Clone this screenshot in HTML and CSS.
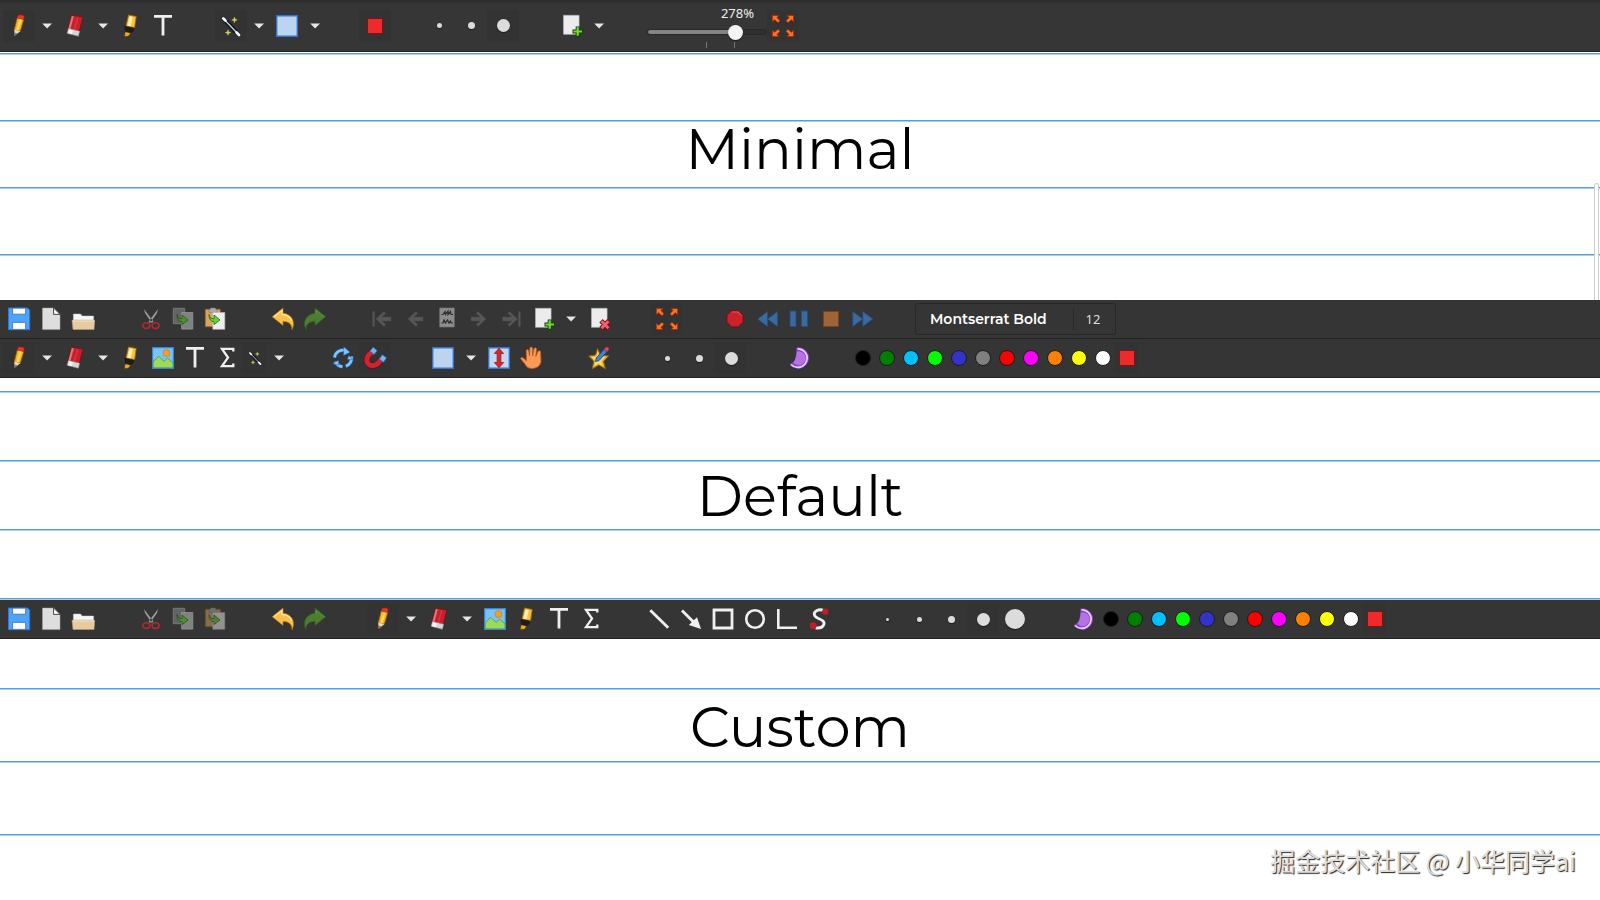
FILE: index.html
```html
<!DOCTYPE html>
<html lang="en">
<head>
    <meta charset="UTF-8">
    <meta name="viewport" content="width=device-width, initial-scale=1.0">
    <title>Toolbar Layouts</title>
    <link rel="stylesheet" href="styles.css">
</head>
<body>
    <!-- icon sprite -->
    <svg class="sprite" aria-hidden="true">
        <symbol id="pencil" viewBox="1 0 24 24">
            <path d="M11.5 3l6.5 1.6-3.7 12.6-6-1.4z" fill="#f8b51c" stroke="#a85a08" stroke-width=".8"/>
            <path d="M14 4l2 .5-3.7 12-2-.4z" fill="#ffdc62"/>
            <path d="M12 1.2q3-1.2 6.3.8l-.6 3.6-6.4-1.6z" fill="#e8362f" stroke="#9b1712" stroke-width=".6"/>
            <path d="M8.3 15.6l6 1.6-5.6 4.6z" fill="#e9d9b4"/>
            <path d="M8.4 18.6l3 1-2.8 2.3z" fill="#777"/>
        </symbol>
        <symbol id="eraser" viewBox="0 0 24 24">
            <path d="M8.6 1l11.2 2.2-4.3 17.6-11.3-3.2z" fill="#c81f2b" stroke="#7e0e15" stroke-width=".8"/>
            <path d="M8.8 2l2 .4-3.8 14-2-.5z" fill="#e2777b"/>
            <path d="M14 3l1.5.3-3.8 14-1.600-.4z" fill="#d9343d"/>
            <path d="M5.500 14.400l11.200 2.800-1.300 5.100-11.400-3z" fill="#d6d6d6" stroke="#888" stroke-width=".6"/>
            <path d="M6 15.300l4 1-1 4-4-1z" fill="#f2f2f2"/>
        </symbol>
        <symbol id="marker" viewBox="1 0 24 24">
            <path d="M10.600 1l7.600 1.600-1.600 11-8.600-1.400z" fill="#f4c343" stroke="#ae6b08" stroke-width=".9"/>
            <path d="M11.600 2.300l3.200.7-2 9.300-3.300-.5z" fill="#fff0ac"/>
            <path d="M6.500 11.800l9.800 2.300-.9 3.400-3.400 1.700-5-1.300z" fill="#1d1d1d"/>
            <path d="M7.300 18l5 1.300-2 2.800-3.600.1z" fill="#f9ae18" stroke="#9c5d00" stroke-width=".5"/>
        </symbol>
        <symbol id="text" viewBox="0 0 24 24">
            <path d="M3 2.400h18M12 2.400v19" fill="none" stroke="#f0f0f0" stroke-width="2.800"/>
        </symbol>
        <symbol id="sigma" viewBox="0 0 24 24">
            <path d="M18.300 5.500V2.800H7l6 8.800-6 8.600h11.300v-2.800" fill="none" stroke="#f0f0f0" stroke-width="2.300"/>
        </symbol>
        <symbol id="wand" viewBox="0 0 24 24">
            <path d="M5 5.200l14.300 15" stroke="#111620" stroke-width="4.400" stroke-linecap="round"/>
            <path d="M5 5.200l14.300 15" stroke="#c3ccd8" stroke-width="1.400" stroke-linecap="round"/>
            <path d="M4.400 4.600l2 2M17.600 18.600l2.400 2.400" stroke="#f5f5f5" stroke-width="2.800" stroke-linecap="round"/>
            <path d="M15.500 3.200l.7 2 2 .7-2 .7-.7 2-.7-2-2-.7 2-.7zM9 15.900l.7 2 2 .7-2 .7-.7 2-.7-2-2-.7 2-.7z" fill="#d9d45a" stroke="#d9d45a" stroke-width=".5"/>
        </symbol>
        <symbol id="select" viewBox="0 0 24 24">
            <path d="M1.700 1.700h20.600v20.600H1.700z" fill="#bdd4f0" stroke="#3273ce" stroke-width="1.400"/>
        </symbol>
        <symbol id="vspace" viewBox="0 0 24 24">
            <path d="M1.700 1.700h20.600v20.600H1.700z" fill="#c3d8f2" stroke="#3273ce" stroke-width="1.400"/>
            <path d="M12 2.200l4.700 5.300h-2.800v9h2.800L12 21.800l-4.700-5.300h2.800v-9H7.300z" fill="#d8262d" stroke="#8c1418" stroke-width=".7"/>
        </symbol>
        <symbol id="addpage" viewBox="0 0 24 24">
            <path d="M4.500 1.300h15.600v19H4.500z" fill="#ececec" stroke="#bbb" stroke-width=".6"/>
            <path d="M16.700 12.400h4v3.200h3.200v3.900h-3.200v3.200h-4v-3.200h-3.200v-3.900h3.200z" fill="#173b08"/>
            <path d="M17.600 13.300h2.200v3.200H23v2.100h-3.200v3.200h-2.200v-3.200h-3.200v-2.100h3.200z" fill="#72dc2c"/>
        </symbol>
        <symbol id="delpage" viewBox="0 0 24 24">
            <path d="M4.500 1.300h15.600v19H4.500z" fill="#ececec" stroke="#bbb" stroke-width=".6"/>
            <path d="M14 13.800l8 8m0-8l-8 8" stroke="#7d1018" stroke-width="4.800"/>
            <path d="M14.500 14.300l7 7m0-7l-7 7" stroke="#f4616a" stroke-width="2.800"/>
        </symbol>
        <symbol id="fullscreen" viewBox="0 0 24 24">
            <g fill="#ff7024" stroke="#9d2500" stroke-width=".7">
                <path d="M1.400 1.400H8L6 3.400l3 3.400-2 2-3.400-3-2.200 2z"/>
                <path d="M22.600 1.400H16l2 2-3 3.400 2 2 3.400-3 2.200 2z"/>
                <path d="M1.400 22.600H8l-2-2 3-3.400-2-2-3.400 3-2.200-2z"/>
                <path d="M22.600 22.600H16l2-2-3-3.400 2-2 3.400 3 2.200-2z"/>
            </g>
        </symbol>
        <symbol id="save" viewBox="0 0 24 24">
            <path d="M1.500 1h19l2.200 2.200v19.500H1.500z" fill="#4ea3fa" stroke="#2c78d8"/>
            <path d="M5.600 1.200h13v6h-13z" fill="#fff" stroke="#2c6fca" stroke-width=".8"/>
            <path d="M5.600 15.400h13v7h-13z" fill="#fff" stroke="#2c6fca" stroke-width=".8"/>
        </symbol>
        <symbol id="new" viewBox="0 0 24 24">
            <path d="M3.500 1H15l6 6.200v15.400H3.500z" fill="#dedede" stroke="#aaa" stroke-width=".5"/>
            <path d="M14.600 1l6.400 6.400h-6.400z" fill="#fff" stroke="#333" stroke-width=".9"/>
        </symbol>
        <symbol id="open" viewBox="0 0 24 24">
            <path d="M2.400 7h7.200l1.400 2h11.600v6H2.400z" fill="#f6f6f6" stroke="#c9c9c9" stroke-width=".5"/>
            <path d="M1 13.200h22.800l-.8 9.300H2z" fill="#e6cba1" stroke="#b99a6d" stroke-width=".6"/>
            <path d="M1.600 14h21.600" stroke="#f6e5c6"/>
        </symbol>
        <symbol id="cut" viewBox="0 0 24 24">
            <path d="M5 2l1 4 6.800 10 1.600-1.600zM19 2l-1 4-6.800 10-1.600-1.600z" fill="#9a9a9a"/>
            <ellipse cx="7.400" cy="18.600" rx="3.500" ry="2.900" fill="none" stroke="#b32832" stroke-width="1.600"/>
            <ellipse cx="16.600" cy="18.600" rx="3.500" ry="2.900" fill="none" stroke="#b32832" stroke-width="1.600"/>
        </symbol>
        <symbol id="copy" viewBox="0 0 24 24">
            <path d="M2.300 1.300h11.400v15.400H2.300z" fill="#606463" stroke="#7f8382" stroke-width=".8"/>
            <path d="M10.600 5.500h11.200v16.600H10.600z" fill="#7e8280" stroke="#989b9a" stroke-width=".7"/>
            <path d="M6 7.500q.5 4.200 5 4.200V8l6 5-6 4.600V14.800Q6 14.500 6 7.500z" fill="#4c932c" stroke="#1f480f" stroke-width=".7"/>
        </symbol>
        <symbol id="paste" viewBox="0 0 24 24">
            <path d="M2.300 2.300h15v17.400h-15z" fill="#d9a55f" stroke="#8e642e" stroke-width=".8"/>
            <path d="M6 3.500l2-2.600h4l2 2.600v2H6z" fill="#aaa" stroke="#777" stroke-width=".5"/>
            <path d="M9.800 5.500h12v16.800h-12z" fill="#eee" stroke="#bbb" stroke-width=".6"/>
            <path d="M6 7.500q.5 4.200 5 4.200V8l6 5-6 4.600V14.800Q6 14.500 6 7.500z" fill="#69d12d" stroke="#256511" stroke-width=".8"/>
        </symbol>
        <symbol id="undo" viewBox="0 0 24 24">
            <path d="M1.200 9.800L12 1v5.200c7.500.6 13.400 7.400 9 16.500.2-5.200-3-8.400-9-8.300v4z" fill="#f9c14a" stroke="#b97509" stroke-width=".7"/>
            <path d="M3 9.700l8-6.300v4c5 .3 8.500 3 9.700 6.500" fill="none" stroke="#ffe5a1" stroke-width="1.200"/>
        </symbol>
        <symbol id="redo" viewBox="0 0 24 24">
            <path d="M22.800 9.800L12 1v5.200C4.500 6.800-1.400 13.600 3 22.700c-.2-5.200 3-8.400 9-8.300v4z" fill="#4c7e30" stroke="#315b1d" stroke-width=".7"/>
            <path d="M21 9.700l-8-6.300v4" fill="none" stroke="#5f9142"/>
        </symbol>
        <symbol id="prev" viewBox="0 0 24 24">
            <path d="M5 12l8-7.500 1.800 1.800-4 3.700H20v4h-9.200l4 3.700-1.800 1.800z" fill="#555758" stroke="#484a4a" stroke-width=".6"/>
        </symbol>
        <symbol id="first" viewBox="0 0 24 24">
            <path d="M5 12l8-7.500 1.800 1.800-4 3.700H20v4h-9.200l4 3.700-1.800 1.800zM1.600 4.500h2v15h-2z" fill="#555758" stroke="#484a4a" stroke-width=".6"/>
        </symbol>
        <symbol id="next" viewBox="0 0 24 24">
            <path d="M19 12l-8-7.500-1.800 1.800 4 3.700H4v4h9.200l-4 3.700 1.800 1.800z" fill="#555758" stroke="#484a4a" stroke-width=".6"/>
        </symbol>
        <symbol id="last" viewBox="0 0 24 24">
            <path d="M18.500 12l-8-7.500-1.800 1.800 4 3.700H3.500v4h9.200l-4 3.700 1.800 1.800zM19.400 4.500h2v15h-2z" fill="#555758" stroke="#484a4a" stroke-width=".6"/>
        </symbol>
        <symbol id="annotated" viewBox="0 0 24 24">
            <path d="M4.700 1h14.600v19H4.700z" fill="#8c8e8e" stroke="#777" stroke-width=".6"/>
            <path d="M6.500 7.500h1.500l2-3 .5 3 2.500-3.500v3.500l2.500-3 .5 3h2M6.500 16H8l1-3 1.500 3 2-3 1.500 3 1.500-2 .5 2h2" fill="none" stroke="#292929" stroke-width="1.200"/>
        </symbol>
        <symbol id="record" viewBox="0 0 24 24">
            <path d="M8.600 3.600h6.800l4.800 4.800v6.800L15.400 20H8.600l-4.800-4.800V8.400z" fill="#c9222b" stroke="#6f0c12"/>
            <path d="M9 5h6l3.600 3.600" fill="none" stroke="#e75359"/>
        </symbol>
        <symbol id="rewind" viewBox="0 0 24 24">
            <path d="M12.500 4.500v15L2.600 12zM22.500 4.500v15L12.600 12z" fill="#3a6aa0" stroke="#274d81" stroke-width=".8"/>
        </symbol>
        <symbol id="pause" viewBox="0 0 24 24">
            <path d="M3 4h6v15.500H3zM14.500 4h6v15.500h-6z" fill="#3a6aa0" stroke="#274d81"/>
        </symbol>
        <symbol id="stop" viewBox="0 0 24 24">
            <path d="M4.500 4.500h15v15h-15z" fill="#9c6438" stroke="#7e4318"/>
        </symbol>
        <symbol id="forward" viewBox="0 0 24 24">
            <path d="M1.800 4.500v15l9.900-7.500zM11.800 4.500v15l9.900-7.500z" fill="#3a6aa0" stroke="#274d81" stroke-width=".8"/>
        </symbol>
        <symbol id="image" viewBox="0 0 24 24">
            <path d="M1.600 1.600h20.800v20.800H1.600z" fill="#78c3f8"/>
            <circle cx="15.400" cy="7" r="3.500" fill="#eda02a" stroke="#c87913" stroke-width=".6"/>
            <path d="M2 16l5.600-5.600 5.800 5 3-3.400 5.800 5v5H2z" fill="#9bda5b" stroke="#5aa529" stroke-width=".9"/>
            <path d="M1.600 1.600h20.800v20.800H1.600z" fill="none" stroke="#3585d8" stroke-width="1.200"/>
        </symbol>
        <symbol id="rotate" viewBox="0 0 24 24">
            <path d="M3.600 11.500a8.400 8.400 0 0 1 11-7M20.400 10.500a8.400 8.400 0 0 1-5.600 9.700M11.500 20.700a8.400 8.400 0 0 1-7.200-5.200" fill="none" stroke="#1b5fae" stroke-width="4"/>
            <path d="M3.600 11.500a8.400 8.400 0 0 1 11-7M20.400 10.500a8.400 8.400 0 0 1-5.600 9.700M11.500 20.700a8.400 8.400 0 0 1-7.200-5.200" fill="none" stroke="#83c4fb" stroke-width="2.800"/>
            <path d="M12.800.8l6.200 5.400-6.500 3.200zM22.300 13.600l-4.600-4-1.200 4zM1.800 17.800l5.700-3.600.3 5z" fill="#83c4fb" stroke="#1b5fae" stroke-width=".5"/>
        </symbol>
        <symbol id="magnet" viewBox="0 0 24 24">
            <path d="M9.500 6C3.500 9 2.600 15 5.500 18s9 2 13-5" fill="none" stroke="#6e0c12" stroke-width="6.200"/>
            <path d="M9.500 6C3.500 9 2.600 15 5.500 18s9 2 13-5" fill="none" stroke="#cd2530" stroke-width="4.800"/>
            <path d="M10.300 1.200l3.900 3.600-3.200 3.700-4-3.700zM19.300 8.800l4.200 3-2.900 4.400-4.300-3.200z" fill="#6fb6f8" stroke="#2d6cb4" stroke-width=".7"/>
        </symbol>
        <symbol id="hand" viewBox="0 0 24 24">
            <path d="M1.400 12.400q1.400-2 3.600.2l2.500 2.200L7.200 4.500q1-2 2.500 0l.8 5.500.4-8q1.300-1.900 2.700 0v8l1.500-7.500q1.500-1.400 2.500.3l-.8 7.700 2.400-5.500q1.800-1 2.400.8L22 16q-2 6.500-9 6.500-5 0-7-4.500z" fill="#f99a57" stroke="#c35a17" stroke-width=".8"/>
        </symbol>
        <symbol id="star" viewBox="0 0 24 24">
            <path d="M10.500 2.500l3 6.500 8.200.8-5.200 5.600 2 7.400-6.700-3.600-6.600 3.600 1.600-7.600L1.600 10l7-1z" fill="#e9b52e" stroke="#8a5f08"/>
            <path d="M10.500 5.500l2 4.900 5.600.6-3.700 4 1.300 5-4.200-2.400-4.200 2.400 1.300-5.300L5 11.300l4.400-.8z" fill="#f9da74"/>
            <path d="M8.600 15.600l.6-3.600 8.600-9.600 3 2.500-8.700 9.600z" fill="#3d83dc" stroke="#173a77" stroke-width=".8"/>
            <path d="M16.800 3.300l1.700-1.900q1.300-1.200 2.700 0t.7 2.500l-1.700 1.900z" fill="#e94750" stroke="#8a1820" stroke-width=".6"/>
        </symbol>
        <symbol id="moon" viewBox="0 0 24 24">
            <path d="M9.500 1.400A10.700 10.700 0 1 1 2.600 18.200L7 15.500Q9.500 11 9.500 1.400z" fill="#8b3fc4"/>
            <path d="M10.500 2.800A9.300 9.300 0 1 1 4 18.500" fill="none" stroke="#e8ccff" stroke-width="1.800"/>
            <path d="M9.800 5.500A7 7 0 1 1 6.300 16.800Q9.500 12.500 9.800 5.500z" fill="#b274e5"/>
        </symbol>
        <symbol id="line" viewBox="0 0 24 24">
            <path d="M3.300 3.200l17.900 17.600" stroke="#f0f0f0" stroke-width="2.800"/>
        </symbol>
        <symbol id="arrow" viewBox="0 0 24 24">
            <path d="M3 3.500l13 13" stroke="#f0f0f0" stroke-width="2.800"/>
            <path d="M22 22l-12.200-4 8.200-7.800z" fill="#f0f0f0"/>
        </symbol>
        <symbol id="rect" viewBox="0 0 24 24">
            <path d="M3 3h18v18H3z" fill="none" stroke="#f0f0f0" stroke-width="2.800"/>
        </symbol>
        <symbol id="circle" viewBox="0 0 24 24">
            <circle cx="12" cy="12" r="8.800" fill="none" stroke="#f0f0f0" stroke-width="2.600"/>
        </symbol>
        <symbol id="axes" viewBox="0 0 24 24">
            <path d="M3.300 2v18.700H22" fill="none" stroke="#f0f0f0" stroke-width="2.600"/>
        </symbol>
        <symbol id="spline" viewBox="0 0 24 24">
            <path d="M17.500 4q-4-2.200-7.500-.6C5.500 5.800 7 9.500 11 11.200s7.500 3.600 5.500 7Q14.500 21.800 8.500 20.800" fill="none" stroke="#f0f0f0" stroke-width="2.800"/>
            <circle cx="18.300" cy="4.600" r="3.200" fill="#c11d24"/>
            <circle cx="6.200" cy="18.700" r="3.400" fill="#c11d24"/>
        </symbol>
        <symbol id="caret" viewBox="0 0 24 24">
            <path d="M7.200 9.600h9.800L12.100 14.600z" fill="#e6e6e6"/>
        </symbol>
    </svg>

    <div class="toolbar toolbar-tall" role="toolbar" aria-label="Minimal toolbar">
        <div class="group">
            <button class="tool active" aria-label="Pen"><svg><use href="#pencil"/></svg></button>
            <button class="tool drop" aria-label="Pen options"><svg><use href="#caret"/></svg></button>
            <button class="tool" aria-label="Eraser"><svg><use href="#eraser"/></svg></button>
            <button class="tool drop" aria-label="Eraser options"><svg><use href="#caret"/></svg></button>
            <button class="tool" aria-label="Highlighter"><svg><use href="#marker"/></svg></button>
            <button class="tool" aria-label="Text"><svg><use href="#text"/></svg></button>
        </div>
        <div class="group group-tight">
            <button class="tool active" aria-label="Default tool"><svg><use href="#wand"/></svg></button>
            <button class="tool drop" aria-label="Default tool options"><svg><use href="#caret"/></svg></button>
            <button class="tool" aria-label="Select rectangle"><svg><use href="#select"/></svg></button>
            <button class="tool drop" aria-label="Selection options"><svg><use href="#caret"/></svg></button>
        </div>
        <div class="group group-tight">
            <button class="tool active" aria-label="Select color"><span class="swatch current"></span></button>
        </div>
        <div class="group">
            <button class="tool" aria-label="Fine"><span class="dot dot-5"></span></button>
            <button class="tool" aria-label="Medium"><span class="dot dot-7"></span></button>
            <button class="tool active" aria-label="Thick"><span class="dot dot-13"></span></button>
        </div>
        <div class="group">
            <button class="tool" aria-label="Add page"><svg><use href="#addpage"/></svg></button>
            <button class="tool drop" aria-label="Page type"><svg><use href="#caret"/></svg></button>
        </div>
        <div class="group">
            <div class="zoom">
                <output for="zoom">278%</output>
                <input type="range" id="zoom" min="0" max="358" value="278" aria-label="Zoom">
                <div class="ticks"><span></span><span></span></div>
            </div>
            <button class="tool active" aria-label="Fullscreen"><svg><use href="#fullscreen"/></svg></button>
        </div>
    </div>

    <section class="paper paper-minimal">
        <h2>Minimal</h2>
        <div class="scroll-thumb"></div>
    </section>

    <div class="toolbar" role="toolbar" aria-label="Default toolbar, first row">
        <div class="group">
            <button class="tool" aria-label="Save"><svg><use href="#save"/></svg></button>
            <button class="tool" aria-label="New"><svg><use href="#new"/></svg></button>
            <button class="tool" aria-label="Open"><svg><use href="#open"/></svg></button>
        </div>
        <div class="group">
            <button class="tool" aria-label="Cut"><svg><use href="#cut"/></svg></button>
            <button class="tool" aria-label="Copy"><svg><use href="#copy"/></svg></button>
            <button class="tool" aria-label="Paste"><svg><use href="#paste"/></svg></button>
        </div>
        <div class="group">
            <button class="tool" aria-label="Undo"><svg><use href="#undo"/></svg></button>
            <button class="tool" aria-label="Redo"><svg><use href="#redo"/></svg></button>
        </div>
        <div class="group">
            <button class="tool" aria-label="First page"><svg><use href="#first"/></svg></button>
            <button class="tool" aria-label="Previous page"><svg><use href="#prev"/></svg></button>
            <button class="tool" aria-label="Next annotated page"><svg><use href="#annotated"/></svg></button>
            <button class="tool" aria-label="Next page"><svg><use href="#next"/></svg></button>
            <button class="tool" aria-label="Last page"><svg><use href="#last"/></svg></button>
            <button class="tool" aria-label="Add page"><svg><use href="#addpage"/></svg></button>
            <button class="tool drop" aria-label="Page type"><svg><use href="#caret"/></svg></button>
            <button class="tool" aria-label="Delete page"><svg><use href="#delpage"/></svg></button>
        </div>
        <div class="group">
            <button class="tool active" aria-label="Fullscreen"><svg><use href="#fullscreen"/></svg></button>
        </div>
        <div class="group">
            <button class="tool" aria-label="Record"><svg><use href="#record"/></svg></button>
            <button class="tool" aria-label="Rewind"><svg><use href="#rewind"/></svg></button>
            <button class="tool" aria-label="Pause"><svg><use href="#pause"/></svg></button>
            <button class="tool" aria-label="Stop"><svg><use href="#stop"/></svg></button>
            <button class="tool" aria-label="Forward"><svg><use href="#forward"/></svg></button>
        </div>
        <div class="group">
            <button class="font-button"><span class="font-name">Montserrat Bold</span><span class="font-size">12</span></button>
        </div>
    </div>
    <div class="toolbar" role="toolbar" aria-label="Default toolbar, second row">
        <div class="group">
            <button class="tool active" aria-label="Pen"><svg><use href="#pencil"/></svg></button>
            <button class="tool drop" aria-label="Pen options"><svg><use href="#caret"/></svg></button>
            <button class="tool" aria-label="Eraser"><svg><use href="#eraser"/></svg></button>
            <button class="tool drop" aria-label="Eraser options"><svg><use href="#caret"/></svg></button>
            <button class="tool" aria-label="Highlighter"><svg><use href="#marker"/></svg></button>
            <button class="tool" aria-label="Image"><svg><use href="#image"/></svg></button>
            <button class="tool" aria-label="Text"><svg><use href="#text"/></svg></button>
            <button class="tool" aria-label="Math"><svg><use href="#sigma"/></svg></button>
            <button class="tool small active" aria-label="Default tool"><svg><use href="#wand"/></svg></button>
            <button class="tool drop" aria-label="Default tool options"><svg><use href="#caret"/></svg></button>
        </div>
        <div class="group">
            <button class="tool" aria-label="Rotation snapping"><svg><use href="#rotate"/></svg></button>
            <button class="tool active" aria-label="Grid snapping"><svg><use href="#magnet"/></svg></button>
        </div>
        <div class="group">
            <button class="tool" aria-label="Select rectangle"><svg><use href="#select"/></svg></button>
            <button class="tool drop" aria-label="Selection options"><svg><use href="#caret"/></svg></button>
            <button class="tool" aria-label="Vertical space"><svg><use href="#vspace"/></svg></button>
            <button class="tool" aria-label="Hand"><svg><use href="#hand"/></svg></button>
        </div>
        <div class="group">
            <button class="tool" aria-label="Shape recognizer"><svg><use href="#star"/></svg></button>
        </div>
        <div class="group">
            <button class="tool" aria-label="Fine"><span class="dot dot-5"></span></button>
            <button class="tool" aria-label="Medium"><span class="dot dot-7"></span></button>
            <button class="tool active" aria-label="Thick"><span class="dot dot-13"></span></button>
        </div>
        <div class="group">
            <button class="tool" aria-label="Fill"><svg><use href="#moon"/></svg></button>
        </div>
        <div class="group">
            <button class="tool color" aria-label="Black"><span class="swatch black"></span></button>
            <button class="tool color" aria-label="Green"><span class="swatch green"></span></button>
            <button class="tool color" aria-label="Light blue"><span class="swatch lightblue"></span></button>
            <button class="tool color" aria-label="Light green"><span class="swatch lightgreen"></span></button>
            <button class="tool color" aria-label="Blue"><span class="swatch blue"></span></button>
            <button class="tool color" aria-label="Gray"><span class="swatch gray"></span></button>
            <button class="tool color" aria-label="Red"><span class="swatch red"></span></button>
            <button class="tool color" aria-label="Magenta"><span class="swatch magenta"></span></button>
            <button class="tool color" aria-label="Orange"><span class="swatch orange"></span></button>
            <button class="tool color" aria-label="Yellow"><span class="swatch yellow"></span></button>
            <button class="tool color" aria-label="White"><span class="swatch white"></span></button>
            <button class="tool color active" aria-label="Select color"><span class="swatch current"></span></button>
        </div>
    </div>

    <section class="paper paper-default">
        <h2>Default</h2>
    </section>

    <div class="toolbar" role="toolbar" aria-label="Custom toolbar">
        <div class="group">
            <button class="tool" aria-label="Save"><svg><use href="#save"/></svg></button>
            <button class="tool" aria-label="New"><svg><use href="#new"/></svg></button>
            <button class="tool" aria-label="Open"><svg><use href="#open"/></svg></button>
        </div>
        <div class="group">
            <button class="tool" aria-label="Cut"><svg><use href="#cut"/></svg></button>
            <button class="tool" aria-label="Copy"><svg><use href="#copy"/></svg></button>
            <button class="tool dim" aria-label="Paste"><svg><use href="#paste"/></svg></button>
        </div>
        <div class="group">
            <button class="tool" aria-label="Undo"><svg><use href="#undo"/></svg></button>
            <button class="tool" aria-label="Redo"><svg><use href="#redo"/></svg></button>
        </div>
        <div class="group">
            <button class="tool active" aria-label="Pen"><svg><use href="#pencil"/></svg></button>
            <button class="tool drop" aria-label="Pen options"><svg><use href="#caret"/></svg></button>
            <button class="tool" aria-label="Eraser"><svg><use href="#eraser"/></svg></button>
            <button class="tool drop" aria-label="Eraser options"><svg><use href="#caret"/></svg></button>
            <button class="tool" aria-label="Image"><svg><use href="#image"/></svg></button>
            <button class="tool" aria-label="Highlighter"><svg><use href="#marker"/></svg></button>
            <button class="tool" aria-label="Text"><svg><use href="#text"/></svg></button>
            <button class="tool" aria-label="Math"><svg><use href="#sigma"/></svg></button>
        </div>
        <div class="group">
            <button class="tool" aria-label="Line"><svg><use href="#line"/></svg></button>
            <button class="tool" aria-label="Arrow"><svg><use href="#arrow"/></svg></button>
            <button class="tool" aria-label="Rectangle"><svg><use href="#rect"/></svg></button>
            <button class="tool" aria-label="Ellipse"><svg><use href="#circle"/></svg></button>
            <button class="tool" aria-label="Coordinate system"><svg><use href="#axes"/></svg></button>
            <button class="tool" aria-label="Spline"><svg><use href="#spline"/></svg></button>
        </div>
        <div class="group">
            <button class="tool" aria-label="Very fine"><span class="dot dot-3"></span></button>
            <button class="tool" aria-label="Fine"><span class="dot dot-5"></span></button>
            <button class="tool" aria-label="Medium"><span class="dot dot-7"></span></button>
            <button class="tool active" aria-label="Thick"><span class="dot dot-13"></span></button>
            <button class="tool" aria-label="Very thick"><span class="dot dot-20"></span></button>
        </div>
        <div class="group">
            <button class="tool" aria-label="Fill"><svg><use href="#moon"/></svg></button>
            <button class="tool color" aria-label="Black"><span class="swatch black"></span></button>
            <button class="tool color" aria-label="Green"><span class="swatch green"></span></button>
            <button class="tool color" aria-label="Light blue"><span class="swatch lightblue"></span></button>
            <button class="tool color" aria-label="Light green"><span class="swatch lightgreen"></span></button>
            <button class="tool color" aria-label="Blue"><span class="swatch blue"></span></button>
            <button class="tool color" aria-label="Gray"><span class="swatch gray"></span></button>
            <button class="tool color" aria-label="Red"><span class="swatch red"></span></button>
            <button class="tool color" aria-label="Magenta"><span class="swatch magenta"></span></button>
            <button class="tool color" aria-label="Orange"><span class="swatch orange"></span></button>
            <button class="tool color" aria-label="Yellow"><span class="swatch yellow"></span></button>
            <button class="tool color" aria-label="White"><span class="swatch white"></span></button>
            <button class="tool color active" aria-label="Select color"><span class="swatch current"></span></button>
        </div>
    </div>

    <section class="paper paper-custom">
        <h2>Custom</h2>
        <p class="credit" lang="zh">掘金技术社区 @ 小华同学ai</p>
    </section>
</body>
</html>
```
FILE: styles.css
```css
* {
    box-sizing: border-box;
}
body {
    display: flex;
    flex-direction: column;
    min-height: 100vh;
    margin: 0;
    background-color: #fff;
    color: #000;
    font-family: Montserrat, Inter, sans-serif;
}
.sprite {
    display: none;
}

/* toolbars */
.toolbar {
    display: flex;
    align-items: center;
    gap: 36px;
    height: 39px;
    padding: 0 3px;
    background-color: #353535;
    border-bottom: 1px solid #222;
    overflow: hidden;
}
.toolbar-tall {
    height: 52px;
    background-image: linear-gradient(#2d2d2d, #363636 5px);
}
.group {
    display: flex;
    flex: none;
    align-items: center;
}
.group-tight {
    margin-right: -4px;
}
.tool {
    display: flex;
    align-items: center;
    justify-content: center;
    width: 32px;
    height: 32px;
    padding: 0;
    border: none;
    border-radius: 3px;
    background: none;
    cursor: pointer;
}
.tool.active {
    background-color: #333;
}
.tool svg {
    flex: none;
    width: 24px;
    height: 24px;
}
.tool.drop, .tool.color, .tool.small {
    width: 24px;
}
.tool.small svg {
    width: 16px;
    height: 16px;
}
.tool.dim svg {
    opacity: 0.5;
}

/* thickness dots */
.dot {
    border-radius: 50%;
    background-color: #dcdcdc;
    box-shadow: 0 1px 1px #1c1c1c;
}
.dot-3 {
    width: 3px;
    height: 3px;
}
.dot-5 {
    width: 5px;
    height: 5px;
}
.dot-7 {
    width: 7px;
    height: 7px;
}
.dot-13 {
    width: 13px;
    height: 13px;
}
.dot-20 {
    width: 20px;
    height: 20px;
}

/* colors */
.swatch {
    width: 16px;
    height: 16px;
    border: 1px solid #1c1c1c;
    border-radius: 50%;
}
.black {
    background-color: #000;
}
.green {
    background-color: #008000;
}
.lightblue {
    background-color: #00c0ff;
}
.lightgreen {
    background-color: #00ff00;
}
.blue {
    background-color: #3333cc;
}
.gray {
    background-color: #808080;
}
.red {
    background-color: #ff0000;
}
.magenta {
    background-color: #ff00ff;
}
.orange {
    background-color: #ff8000;
}
.yellow {
    background-color: #ffff00;
}
.white {
    background-color: #fff;
}
.current {
    border-color: #7c1414;
    border-radius: 1px;
    background-color: #ee2b2b;
}

/* zoom slider */
.zoom {
    width: 120px;
}
.zoom output {
    display: block;
    padding-right: 13px;
    color: #eee;
    font-family: "Noto Sans", sans-serif;
    font-size: 13px;
    line-height: 18px;
    text-align: right;
}
.zoom input {
    display: block;
    width: 100%;
    height: 16px;
    margin: 2px 0;
    appearance: none;
    background: none;
}
.zoom input::-webkit-slider-runnable-track {
    height: 6px;
    border: 1px solid #282828;
    border-radius: 3px;
    background: linear-gradient(to right, #858585 75%, #303030 75%);
}
.zoom input::-webkit-slider-thumb {
    width: 15px;
    height: 15px;
    margin-top: -5px;
    appearance: none;
    border-radius: 50%;
    background-color: #f4f4f4;
    box-shadow: 0 1px 1px #1c1c1c;
}
.ticks {
    display: flex;
    justify-content: flex-end;
    gap: 27px;
    padding-right: 32px;
}
.ticks span {
    width: 1px;
    height: 6px;
    background-color: #777;
}

/* font chooser */
.font-button {
    display: flex;
    align-items: center;
    width: 201px;
    height: 32px;
    padding: 0;
    border: 1px solid #292929;
    border-radius: 3px;
    background-color: #353535;
    color: #fff;
    font-family: Montserrat, Inter, sans-serif;
    font-size: 14px;
}
.font-name {
    flex: 1;
    padding-left: 14px;
    font-weight: 600;
    text-align: left;
}
.font-size {
    width: 42px;
    padding-right: 3px;
    border-left: 1px solid #292929;
    color: #ddd;
    font-family: "Noto Sans", sans-serif;
    font-size: 13px;
    line-height: 22px;
}

/* ruled paper */
.paper {
    position: relative;
    background-color: #fff;
}
.paper h2 {
    margin: 0;
    font-size: 56px;
    font-weight: 400;
    line-height: 74px;
    text-align: center;
}
.paper-minimal {
    padding: 60px 0 114px;
    background-image: repeating-linear-gradient(#5b9bdc 0 1px, #a3d0f5 1px 2px, #fff 2px 67px);
    background-position: 0 1px;
}
.paper-default {
    padding: 81px 0 67px;
    background-image: repeating-linear-gradient(#5b9bdc 0 1px, #a3d0f5 1px 2px, #fff 2px 69px);
    background-position: 0 13px;
    background-repeat: no-repeat;
}
.paper-custom {
    flex: 1;
    padding: 51px 0 0;
    background-image: repeating-linear-gradient(#5b9bdc 0 1px, #a3d0f5 1px 2px, #fff 2px 73px);
    background-position: 0 49px;
    background-repeat: no-repeat;
}
.scroll-thumb {
    position: absolute;
    top: 131px;
    right: 1px;
    bottom: 0;
    width: 5px;
    border: 1px solid #ccc;
    border-bottom: none;
    border-radius: 3px 3px 0 0;
    background-color: #fff;
}
.credit {
    position: absolute;
    right: 24px;
    bottom: 22px;
    margin: 0;
    color: #ddd;
    font-family: "Noto Sans CJK SC", sans-serif;
    font-size: 25px;
    line-height: 36px;
    text-shadow: 1px 1px 1px #222;
}
```
